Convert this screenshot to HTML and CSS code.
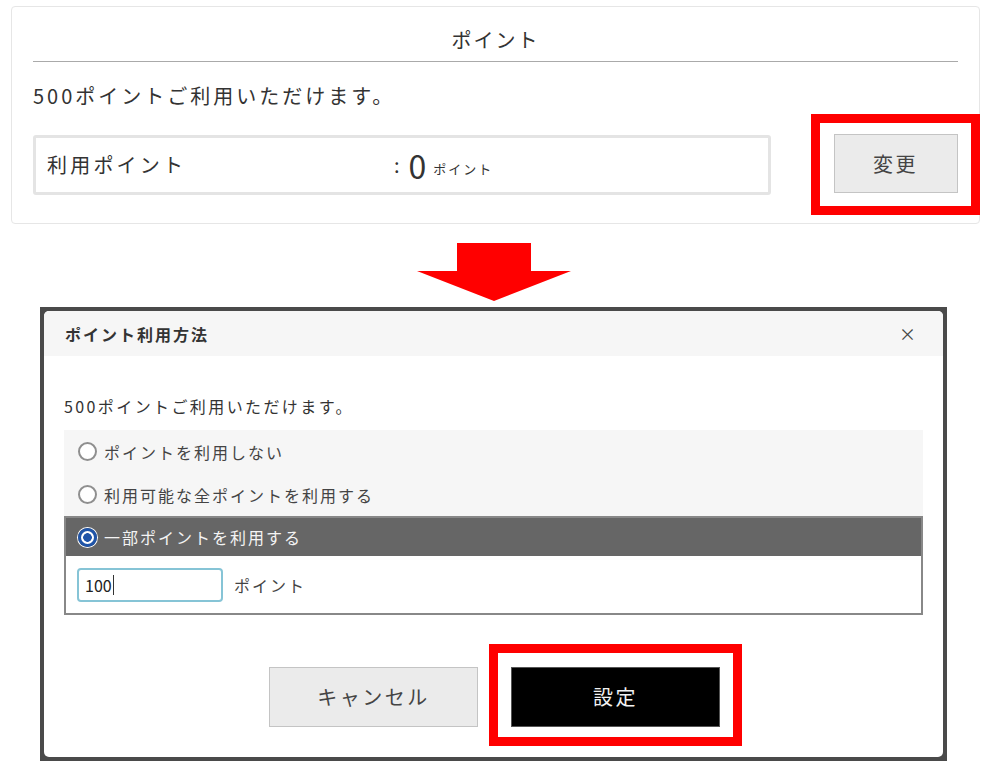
FILE: index.html
```html
<!DOCTYPE html>
<html lang="ja">

<head>
    <meta charset="UTF-8">
    <meta name="viewport" content="width=device-width, initial-scale=1.0">
    <title>ポイント利用方法</title>
    <link rel="stylesheet" href="styles.css">
</head>

<body>
    <div class="page">
        <!-- before: point summary card -->
        <div class="point-card">
            <div class="point-title">ポイント</div>
            <p class="point-note">500ポイントご利用いただけます。</p>
            <div class="point-row">
                <div class="point-field">
                    <span class="field-label">利用ポイント</span>
                    <span class="field-colon">:</span>
                    <span class="field-value">0</span>
                    <span class="field-unit">ポイント</span>
                </div>
                <div class="highlight highlight-change">
                    <button class="btn btn-gray btn-change">変更</button>
                </div>
            </div>
        </div>

        <svg class="down-arrow" width="154" height="58" viewBox="0 0 154 58">
            <polygon points="40,0 114,0 114,28 154,28 77,58 0,28 40,28" fill="#ff0000" />
        </svg>

        <!-- after: modal -->
        <div class="modal-frame">
            <div class="modal">
                <div class="modal-header">
                    <span class="modal-title">ポイント利用方法</span>
                    <span class="modal-close">×</span>
                </div>
                <div class="modal-body">
                    <p class="modal-note">500ポイントご利用いただけます。</p>
                    <div class="options">
                        <div class="option">
                            <span class="radio"></span>
                            <span>ポイントを利用しない</span>
                        </div>
                        <div class="option">
                            <span class="radio"></span>
                            <span>利用可能な全ポイントを利用する</span>
                        </div>
                        <div class="option-group">
                            <div class="option option-selected">
                                <span class="radio radio-on"></span>
                                <span>一部ポイントを利用する</span>
                            </div>
                            <div class="amount-row">
                                <div class="amount-input">100<span class="caret"></span></div>
                                <span class="amount-unit">ポイント</span>
                            </div>
                        </div>
                    </div>
                    <div class="modal-footer">
                        <button class="btn btn-gray btn-wide">キャンセル</button>
                        <div class="highlight highlight-submit">
                            <button class="btn btn-black btn-wide">設定</button>
                        </div>
                    </div>
                </div>
            </div>
        </div>
    </div>
</body>

</html>
```

FILE: styles.css
```css
body {
    margin: 0;
    background: #fff;
    color: #333;
    font-family: "Noto Sans CJK JP", "Noto Sans", sans-serif;
}

p {
    margin: 0;
}

.page {
    padding-top: 6px;
}

/* top card */
.point-card {
    margin-left: 11px;
    width: 969px;
    box-sizing: border-box;
    border: 1px solid #e6e6e6;
    border-radius: 4px;
    padding: 0 21px 8px 21px;
}

.point-title {
    text-align: center;
    font-size: 20px;
    letter-spacing: 2px;
    line-height: 30px;
    padding: 18px 0 6px 0;
    border-bottom: 1px solid #aaa;
}

.point-note {
    margin-top: 19px;
    font-size: 20px;
    letter-spacing: 3px;
    line-height: 30px;
}

.point-row {
    display: flex;
    align-items: center;
    margin-top: 3px;
}

.point-field {
    width: 738px;
    height: 60px;
    box-sizing: border-box;
    border: 3px solid #e4e4e4;
    border-radius: 3px;
    display: flex;
    align-items: center;
    padding-left: 11px;
}

.field-label {
    width: 347px;
    font-size: 20px;
    letter-spacing: 3.2px;
}

.field-colon {
    font-size: 20px;
}

.field-value {
    font-size: 32px;
    margin-left: 9px;
    line-height: 1;
}

.field-unit {
    font-size: 13px;
    letter-spacing: 2px;
    margin-left: 7px;
    margin-top: 8px;
}

/* red annotation frames */
.highlight {
    box-sizing: border-box;
    border: 9px solid #ff0000;
    display: flex;
    align-items: center;
    justify-content: center;
}

.highlight-change {
    width: 169px;
    height: 101px;
    margin-left: auto;
    margin-right: -22px;
}

.highlight-submit {
    width: 253px;
    height: 102px;
}

.btn {
    font-family: inherit;
    font-size: 20px;
    letter-spacing: 2.5px;
    box-sizing: border-box;
    cursor: pointer;
}

.btn-gray {
    background: #ebebeb;
    border: 1px solid #c4c4c4;
    color: #444;
}

.btn-black {
    background: #000;
    border: 1px solid #555;
    color: #f2f2f2;
}

.btn-change {
    width: 124px;
    height: 59px;
    margin-top: -2px;
}

.btn-wide {
    width: 209px;
    height: 60px;
    margin-top: 3px;
}

.down-arrow {
    display: block;
    margin: 19px 0 0 417px;
}

/* modal */
.modal-frame {
    margin: 6px 0 0 40px;
    width: 907px;
    box-sizing: border-box;
    padding: 4px;
    background: #4a4a4a;
}

.modal {
    background: #fff;
    border-radius: 5px;
}

.modal-header {
    height: 45px;
    background: #f6f6f6;
    border-radius: 5px 5px 0 0;
    display: flex;
    align-items: center;
    justify-content: space-between;
    padding: 0 27px 0 21px;
}

.modal-title {
    font-size: 16px;
    font-weight: bold;
    letter-spacing: 2px;
}

.modal-close {
    font-size: 17px;
    color: #444;
}

.modal-body {
    padding: 38px 20px 11px 20px;
}

.modal-note {
    font-size: 16px;
    letter-spacing: 2.4px;
    line-height: 24px;
}

.options {
    margin-top: 12px;
    font-size: 16px;
    letter-spacing: 2px;
}

.option {
    height: 43px;
    background: #f6f6f6;
    display: flex;
    align-items: center;
    gap: 7px;
    padding-left: 14px;
    color: #444;
}

.radio {
    width: 19px;
    height: 19px;
    box-sizing: border-box;
    border: 2px solid #8f8f8f;
    border-radius: 50%;
    background: #fff;
    flex-shrink: 0;
}

.radio-on {
    border: 3px solid #1f54a8;
    box-shadow: 0 0 0 1px #fff;
    background: radial-gradient(circle, #1f54a8 0 4px, #fff 4.6px);
}

.option-group {
    border: 2px solid #888;
}

.option-selected {
    height: 38px;
    background: #666;
    color: #f4f4f4;
    padding-left: 12px;
}

.amount-row {
    height: 57px;
    display: flex;
    align-items: center;
    gap: 11px;
    padding-left: 11px;
}

.amount-input {
    width: 146px;
    height: 34px;
    box-sizing: border-box;
    border: 2px solid #86c4d6;
    border-radius: 4px;
    padding-left: 6px;
    display: flex;
    align-items: center;
    letter-spacing: 0;
    color: #222;
}

.caret {
    display: inline-block;
    width: 1px;
    height: 20px;
    background: #333;
    margin-left: 1px;
}

.amount-unit {
    color: #444;
}

.modal-footer {
    margin-top: 29px;
    display: flex;
    align-items: center;
    gap: 11px;
    padding-left: 205px;
}
```
